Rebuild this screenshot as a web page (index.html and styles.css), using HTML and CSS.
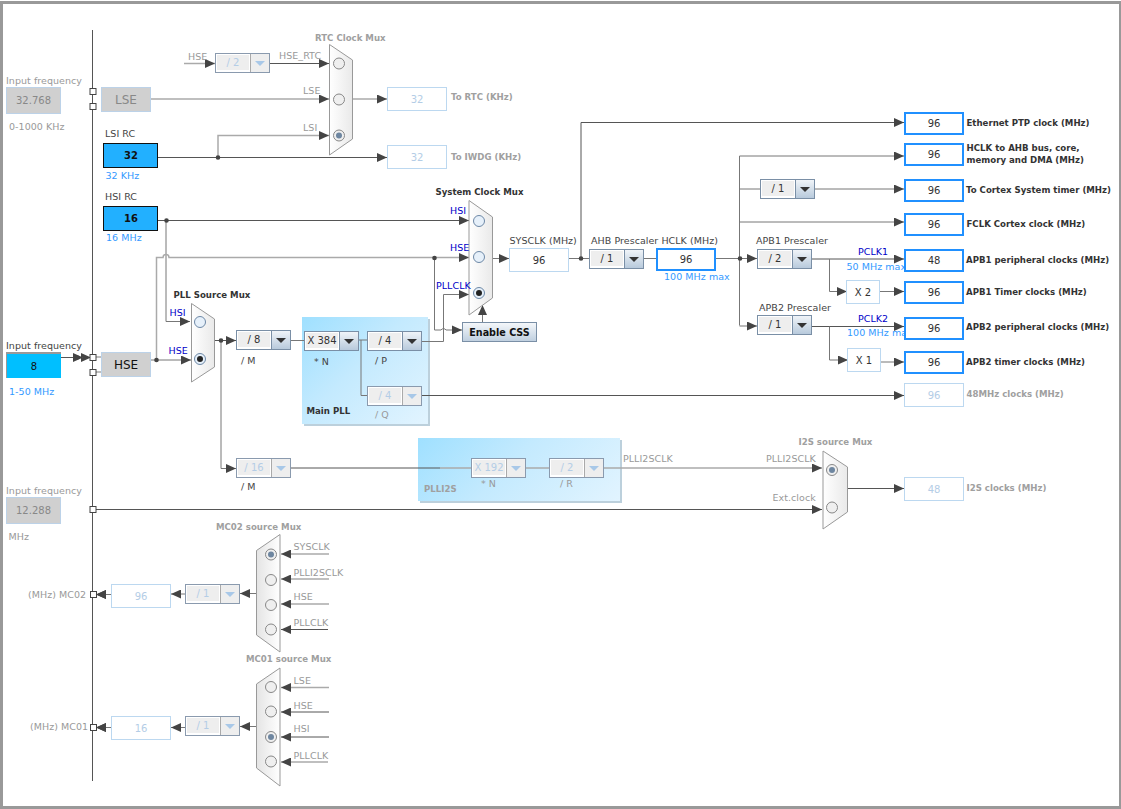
FILE: index.html
```html
<!DOCTYPE html>
<html lang="en">
<head>
    <meta charset="UTF-8">
    <title>Clock Configuration</title>
    <link rel="stylesheet" href="styles.css">
</head>
<body>
<div class="tree">

    <!-- PLL panels sit under the wires -->
    <div class="panel panel-main"></div>
    <div class="panel panel-i2s"></div>

    <svg class="wires" width="1121" height="809" viewBox="0 0 1121 809">
        <defs>
            <marker id="arr" markerUnits="userSpaceOnUse" markerWidth="10" markerHeight="9" refX="10" refY="4.5" orient="auto">
                <path class="arrow" d="M0 0L10 4.5L0 9z"/>
            </marker>
            <linearGradient id="muxfill" x1="0" x2="1" y1="0" y2="0">
                <stop offset="0" stop-color="#ffffff"/>
                <stop offset="1" stop-color="#e9e9e9"/>
            </linearGradient>
            <linearGradient id="muxfillr" x1="0" x2="1" y1="0" y2="0">
                <stop offset="0" stop-color="#e4e4e4"/>
                <stop offset="1" stop-color="#ffffff"/>
            </linearGradient>
        </defs>

        <!-- main bus -->
        <path class="w" d="M92.5 30V781"/>

        <!-- RTC / IWDG -->
        <path class="wg" d="M184 63.5H215" marker-end="url(#arr)"/>
        <path class="w" d="M270 63.5H329" marker-end="url(#arr)"/>
        <path class="wg" d="M151 99H329" marker-end="url(#arr)"/>
        <path class="wg" d="M352 99H387" marker-end="url(#arr)"/>
        <path class="wg" d="M218 157V135.5H329" marker-end="url(#arr)"/>
        <path class="w" d="M158 157.5H387" marker-end="url(#arr)"/>

        <!-- HSI and HSE to the muxes -->
        <path class="w" d="M158 220.5H469" marker-end="url(#arr)"/>
        <path class="wl" d="M166 220.5V321.5H190" marker-end="url(#arr)"/>
        <path class="wg" d="M156.5 360V257.5H163a3 3 0 0 1 6 0H469" marker-end="url(#arr)"/>
        <path class="wl" d="M434.5 258V330H441a3 3 0 0 1 5 0H462" marker-end="url(#arr)"/>
        <path class="wl" d="M422 341.5H443.5V294.5H469" marker-end="url(#arr)"/>
        <path class="wl" d="M482.5 322V305" marker-end="url(#arr)"/>

        <!-- input and HSE -->
        <path class="w" d="M61 357.5H91" marker-end="url(#arr)"/>
        <path class="wg" d="M92 357H101M92 372H101"/>
        <path class="w" d="M61 357.5H83" marker-end="url(#arr)"/>
        <path class="wl" d="M151 360H191" marker-end="url(#arr)"/>

        <!-- PLL -->
        <path class="w" d="M214 340.5H236" marker-end="url(#arr)"/>
        <path class="wl" d="M221 340.5V468.5H236" marker-end="url(#arr)"/>
        <path class="wl" d="M291 340.5H304M359 340H367M361 340V395.5H367"/>
        <path class="w" d="M422 395.5H904" marker-end="url(#arr)"/>

        <!-- I2S -->
        <path class="w" d="M291 468H440"/>
        <path class="wg" d="M440 468H472M526 468H549"/>
        <path class="wg" d="M604 468H822" marker-end="url(#arr)"/>
        <path class="w" d="M92 509.5H822" marker-end="url(#arr)"/>
        <path class="w" d="M847 488.5H904" marker-end="url(#arr)"/>

        <!-- SYSCLK to the bus matrix -->
        <path class="wl" d="M492 258.5H509" marker-end="url(#arr)"/>
        <path class="wl" d="M569 258.5H589M644 258.5H657"/>
        <path class="w" d="M581 258V122.5H904" marker-end="url(#arr)"/>
        <path class="wl" d="M716 258.5H757" marker-end="url(#arr)"/>
        <path class="wl" d="M739.5 325.5V156H904" marker-end="url(#arr)"/>
        <path class="wl" d="M739.5 189H760M815 189H904" marker-end="url(#arr)"/>
        <path class="wl" d="M739.5 222H904" marker-end="url(#arr)"/>
        <path class="wl" d="M739.5 326H757" marker-end="url(#arr)"/>

        <!-- APB -->
        <path class="w" d="M812 259H904" marker-end="url(#arr)"/>
        <path class="wl" d="M829.5 259V291.5H847" marker-end="url(#arr)"/>
        <path class="wl" d="M880 291.5H904" marker-end="url(#arr)"/>
        <path class="w" d="M812 326.5H904" marker-end="url(#arr)"/>
        <path class="wl" d="M829.5 326.5V360H848" marker-end="url(#arr)"/>
        <path class="wl" d="M881 362H904" marker-end="url(#arr)"/>

        <!-- MCO2 / MCO1 -->
        <path class="wg" d="M329 554H281" marker-end="url(#arr)"/>
        <path class="wg" d="M329 579H281" marker-end="url(#arr)"/>
        <path class="wg" d="M329 604H281" marker-end="url(#arr)"/>
        <path class="w" d="M328 629.5H281" marker-end="url(#arr)"/>
        <path class="wg" d="M329 687.5H281" marker-end="url(#arr)"/>
        <path class="w" d="M329 712H281" marker-end="url(#arr)"/>
        <path class="w" d="M329 737H281" marker-end="url(#arr)"/>
        <path class="wg" d="M328 762H281" marker-end="url(#arr)"/>
        <path class="wl" d="M257 593.5H240" marker-end="url(#arr)"/>
        <path class="wl" d="M257 726.5H240" marker-end="url(#arr)"/>
        <path class="wl" d="M185 594H171" marker-end="url(#arr)"/>
        <path class="wl" d="M185 727.5H171" marker-end="url(#arr)"/>
        <path class="wl" d="M111 594.5H96" marker-end="url(#arr)"/>
        <path class="wl" d="M104 594.5H96" marker-end="url(#arr)"/>
        <path class="wl" d="M111 727.5H96" marker-end="url(#arr)"/>
        <path class="wl" d="M104 727.5H96" marker-end="url(#arr)"/>

        <!-- junction dots -->
        <circle class="dot" cx="218" cy="157.5" r="2.3"/>
        <circle class="dot" cx="166.5" cy="220.5" r="2.3"/>
        <circle class="dot" cx="156.5" cy="360" r="2.3"/>
        <circle class="dot" cx="77" cy="357.5" r="2.3"/>
        <circle class="dot" cx="221" cy="340.5" r="2.3"/>
        <circle class="dot" cx="434.5" cy="258" r="2.3"/>
        <circle class="dot" cx="581" cy="258.5" r="2.3"/>
        <circle class="dot" cx="740" cy="258.5" r="2.3"/>

        <!-- bus ports -->
        <rect class="port" x="90" y="88.5" width="6" height="6"/>
        <rect class="port" x="90" y="103.5" width="6" height="6"/>
        <rect class="port" x="90" y="354.5" width="6" height="6"/>
        <rect class="port" x="90" y="369.5" width="6" height="6"/>
        <rect class="port" x="90" y="506.5" width="6" height="6"/>
        <rect class="port" x="90.5" y="591.5" width="6" height="6"/>
        <rect class="port" x="90.5" y="724.5" width="6" height="6"/>

        <!-- muxes -->
        <path class="mux" d="M329.5 44.5L352.5 60V139L329.5 155z"/>
        <circle class="radio" cx="339" cy="63.5" r="5.5"/>
        <circle class="radio" cx="339" cy="99.5" r="5.5"/>
        <circle class="radio" cx="339" cy="135.5" r="5.5"/>
        <circle class="pick" cx="339" cy="135.5" r="3"/>

        <path class="mux" d="M469 200.5L492.5 217V298L469 315z"/>
        <circle class="radio on" cx="479" cy="221" r="5.5"/>
        <circle class="radio on" cx="479" cy="257" r="5.5"/>
        <circle class="radio on" cx="479" cy="293" r="5.5"/>
        <circle class="pick dark" cx="479" cy="293" r="3"/>

        <path class="mux" d="M191.5 303.5L214.5 319V367L191.5 382z"/>
        <circle class="radio on" cx="200" cy="322" r="5.5"/>
        <circle class="radio on" cx="200" cy="359" r="5.5"/>
        <circle class="pick dark" cx="200" cy="359" r="3"/>

        <path class="mux" d="M823 451L847.5 467V512L823 529z"/>
        <circle class="radio" cx="832" cy="470" r="5.5"/>
        <circle class="pick" cx="832" cy="470" r="3"/>
        <circle class="radio" cx="832" cy="507.5" r="5.5"/>

        <path class="mux flip" d="M280 534.5L256.5 550.5V635L280 652z"/>
        <circle class="radio" cx="271" cy="554.5" r="5.5"/>
        <circle class="pick" cx="271" cy="554.5" r="3"/>
        <circle class="radio" cx="271" cy="580" r="5.5"/>
        <circle class="radio" cx="271" cy="605" r="5.5"/>
        <circle class="radio" cx="271" cy="629.5" r="5.5"/>

        <path class="mux flip" d="M280 668L256.5 684V768L280 786z"/>
        <circle class="radio" cx="271" cy="687" r="5.5"/>
        <circle class="radio" cx="271" cy="711.5" r="5.5"/>
        <circle class="radio" cx="271" cy="737" r="5.5"/>
        <circle class="pick" cx="271" cy="737" r="3"/>
        <circle class="radio" cx="271" cy="761.5" r="5.5"/>

        <!-- labels, left side -->
        <text class="t off" x="6" y="84">Input frequency</text>
        <text class="t off" x="9" y="130">0-1000 KHz</text>
        <text class="t" x="105" y="137">LSI RC</text>
        <text class="t max" x="105.5" y="179">32 KHz</text>
        <text class="t" x="105" y="200">HSI RC</text>
        <text class="t max" x="106" y="241">16 MHz</text>
        <text class="t" x="6" y="349">Input frequency</text>
        <text class="t max" x="9" y="395">1-50 MHz</text>
        <text class="t off" x="6" y="494">Input frequency</text>
        <text class="t off" x="8.5" y="540">MHz</text>
        <text class="t off" x="28" y="598">(MHz) MC02</text>
        <text class="t off" x="30" y="730">(MHz) MC01</text>

        <!-- labels, RTC -->
        <text class="t off" x="188" y="60">HSE</text>
        <text class="t off" x="279" y="59">HSE_RTC</text>
        <text class="t off" x="303" y="94">LSE</text>
        <text class="t off" x="303" y="131">LSI</text>
        <text class="b off" x="315" y="41">RTC Clock Mux</text>
        <text class="b off" x="451" y="100">To RTC (KHz)</text>
        <text class="b off" x="451" y="160">To IWDG (KHz)</text>

        <!-- labels, system clock -->
        <text class="b" x="435.5" y="195">System Clock Mux</text>
        <text class="t sel" x="450" y="214">HSI</text>
        <text class="t sel" x="450" y="251">HSE</text>
        <text class="t sel" x="436" y="289">PLLCLK</text>
        <text class="b" x="173.5" y="298">PLL Source Mux</text>
        <text class="t sel" x="169.5" y="316">HSI</text>
        <text class="t sel" x="168.5" y="354">HSE</text>
        <text class="t" x="241" y="364">/ M</text>
        <text class="t" x="314" y="365">* N</text>
        <text class="t" x="375" y="364">/ P</text>
        <text class="t off" x="375" y="418">/ Q</text>
        <text class="b" x="306.5" y="414">Main PLL</text>
        <text class="t" x="241" y="490">/ M</text>
        <text class="t off" x="481" y="487">* N</text>
        <text class="t off" x="560" y="487">/ R</text>
        <text class="b off" x="424" y="492">PLLI2S</text>
        <text class="t off" x="623" y="462">PLLI2SCLK</text>
        <text class="t off" x="766" y="462">PLLI2SCLK</text>
        <text class="t off" x="772.5" y="501">Ext.clock</text>
        <text class="b off" x="798.5" y="445">I2S source Mux</text>

        <text class="t" x="509.5" y="244">SYSCLK (MHz)</text>
        <text class="t" x="591" y="244">AHB Prescaler HCLK (MHz)</text>
        <text class="t max" x="664" y="280">100 MHz max</text>
        <text class="t" x="756" y="244">APB1 Prescaler</text>
        <text class="t" x="759" y="311">APB2 Prescaler</text>
        <text class="t sel" x="858" y="255">PCLK1</text>
        <text class="t max" x="846.5" y="270">50 MHz max</text>
        <text class="t sel" x="858" y="322">PCLK2</text>
        <text class="t max" x="847" y="336">100 MHz max</text>

        <!-- labels, outputs -->
        <text class="b" x="966.5" y="126">Ethernet PTP clock (MHz)</text>
        <text class="b" x="966.5" y="151">HCLK to AHB bus, core,</text>
        <text class="b" x="966.5" y="163">memory and DMA (MHz)</text>
        <text class="b" x="966" y="193">To Cortex System timer (MHz)</text>
        <text class="b" x="966.5" y="227">FCLK Cortex clock (MHz)</text>
        <text class="b" x="966" y="263">APB1 peripheral clocks (MHz)</text>
        <text class="b" x="966" y="295">APB1 Timer clocks (MHz)</text>
        <text class="b" x="966" y="330">APB2 peripheral clocks (MHz)</text>
        <text class="b" x="966" y="365">APB2 timer clocks (MHz)</text>
        <text class="b off" x="966.5" y="397">48MHz clocks (MHz)</text>
        <text class="b off" x="966.5" y="491">I2S clocks (MHz)</text>

        <!-- labels, MCO -->
        <text class="b off" x="216" y="530">MC02 source Mux</text>
        <text class="t off" x="293.5" y="550">SYSCLK</text>
        <text class="t off" x="293.5" y="576">PLLI2SCLK</text>
        <text class="t off" x="293.5" y="600">HSE</text>
        <text class="t off" x="293.5" y="626">PLLCLK</text>
        <text class="b off" x="246" y="662">MC01 source Mux</text>
        <text class="t off" x="293.5" y="684">LSE</text>
        <text class="t off" x="293.5" y="709">HSE</text>
        <text class="t off" x="293.5" y="732">HSI</text>
        <text class="t off" x="293.5" y="759">PLLCLK</text>
    </svg>

    <!-- sources -->
    <div class="box src grey lse-in">32.768</div>
    <div class="box src grey big lse">LSE</div>
    <div class="box src rc lsi">32</div>
    <div class="box src rc hsi">16</div>
    <div class="box src live hse-in">8</div>
    <div class="box src grey big dark-txt hse">HSE</div>
    <div class="box src grey i2s-in">12.288</div>

    <!-- dropdowns -->
    <div class="dd off dd-rtc"><span class="val">/ 2</span><span class="btn"></span></div>
    <div class="dd dd-m"><span class="val">/ 8</span><span class="btn"></span></div>
    <div class="dd dd-n"><span class="val">X 384</span><span class="btn"></span></div>
    <div class="dd dd-p"><span class="val">/ 4</span><span class="btn"></span></div>
    <div class="dd off dd-q"><span class="val">/ 4</span><span class="btn"></span></div>
    <div class="dd off dd-m2"><span class="val">/ 16</span><span class="btn"></span></div>
    <div class="dd off dd-n2"><span class="val">X 192</span><span class="btn"></span></div>
    <div class="dd off dd-r2"><span class="val">/ 2</span><span class="btn"></span></div>
    <div class="dd dd-ahb"><span class="val">/ 1</span><span class="btn"></span></div>
    <div class="dd dd-sys"><span class="val">/ 1</span><span class="btn"></span></div>
    <div class="dd dd-apb1"><span class="val">/ 2</span><span class="btn"></span></div>
    <div class="dd dd-apb2"><span class="val">/ 1</span><span class="btn"></span></div>
    <div class="dd off dd-mco2"><span class="val">/ 1</span><span class="btn"></span></div>
    <div class="dd off dd-mco1"><span class="val">/ 1</span><span class="btn"></span></div>

    <button class="css-btn">Enable CSS</button>

    <!-- outputs -->
    <div class="box out faint o-rtc">32</div>
    <div class="box out faint o-iwdg">32</div>
    <div class="box out o-sysclk">96</div>
    <div class="box out hot o-hclk">96</div>
    <div class="box out hot o-eth">96</div>
    <div class="box out hot o-ahb">96</div>
    <div class="box out hot o-cortex">96</div>
    <div class="box out hot o-fclk">96</div>
    <div class="box out hot o-apb1">48</div>
    <div class="box out hot o-tim1">96</div>
    <div class="box out hot o-apb2">96</div>
    <div class="box out hot o-tim2">96</div>
    <div class="box out faint o-48">96</div>
    <div class="box out faint o-i2s">48</div>
    <div class="box out faint o-mco2">96</div>
    <div class="box out faint o-mco1">16</div>
    <div class="box out o-x2">X 2</div>
    <div class="box out o-x1">X 1</div>
</div>
</body>
</html>
```

FILE: styles.css
```css
body {
    margin: 0;
    background-color: #fff;
    font-family: "DejaVu Sans", sans-serif;
}

.tree {
    position: relative;
    width: 1121px;
    height: 809px;
    overflow: hidden;
}

/* grey frame round the whole picture */
.tree::after {
    content: "";
    position: absolute;
    inset: 1px 0 0 0;
    border: solid #999;
    border-width: 3px 2px 3px 3px;
    pointer-events: none;
}

.wires {
    position: absolute;
    left: 0;
    top: 0;
}

/* wires */
.w, .wl, .wg {
    fill: none;
}

.w {
    stroke: #555;
    stroke-width: 1;
}

.wl {
    stroke: #777;
    stroke-width: 1;
}

.wg {
    stroke: #aaa;
    stroke-width: 1.5;
}

.arrow, .dot {
    fill: #444;
}

.port {
    fill: #fff;
    stroke: #444;
    stroke-width: 1;
}

.mux {
    fill: url(#muxfill);
    stroke: #999;
    stroke-width: 1;
}

.mux.flip {
    fill: url(#muxfillr);
}

.radio {
    fill: #efefef;
    stroke: #888;
    stroke-width: 1;
}

.radio.on {
    fill: #e6f0fa;
    stroke: #6d88a6;
}

.pick {
    fill: #6e86a0;
}

.pick.dark {
    fill: #222;
}

/* labels */
.t, .b {
    font-size: 9.5px;
    letter-spacing: 0.05px;
    fill: #444;
}

.b {
    font-weight: bold;
    font-size: 8.6px;
    letter-spacing: 0;
    fill: #333;
}

.t.off {
    fill: #999;
}

.b.off {
    fill: #a0a0a0;
}

.t.max {
    fill: #3399ff;
}

.t.sel {
    fill: #0000c8;
}

/* PLL panels */
.panel {
    position: absolute;
    background: linear-gradient(135deg, #9fe0ff 0%, #c4eafe 45%, #e2f4ff 100%);
    box-shadow: 2px 2px 0 #bcd0dc;
}

.panel-main {
    left: 302px;
    top: 317px;
    width: 126px;
    height: 107px;
}

.panel-i2s {
    left: 418px;
    top: 438px;
    width: 202px;
    height: 63px;
}

/* value boxes */
.box {
    position: absolute;
    box-sizing: border-box;
    display: flex;
    align-items: center;
    justify-content: center;
    font-size: 10px;
    color: #333;
    background-color: #fff;
}

.src {
    width: 55px;
}

.grey {
    height: 27px;
    background-color: #d0d0d0;
    border: 1px solid #bcd2e8;
    color: #888;
}

.big {
    width: 50px;
    height: 25px;
    font-size: 12px;
}

.dark-txt {
    color: #111;
}

.rc {
    height: 25px;
    background-color: #22b0ff;
    border: 1px solid #111;
    color: #111;
    font-weight: bold;
    padding-left: 1px;
}

.live {
    height: 26px;
    background-color: #00bfff;
    border: solid #999;
    border-width: 2px 0 0 1px;
    color: #111;
}

.lse-in { left: 6px; top: 87px; }
.lse { left: 101px; top: 87px; }
.lsi { left: 103px; top: 143px; }
.hsi { left: 103px; top: 206px; }
.hse-in { left: 6px; top: 352px; }
.hse { left: 101px; top: 352px; }
.i2s-in { left: 6px; top: 497px; }

.out {
    width: 60px;
    height: 24px;
    border: 1px solid #bcd8f0;
}

.out.faint {
    color: #b4cde6;
}

.out.hot {
    height: 23px;
    border: 2px solid #2090ff;
}

.o-rtc { left: 387px; top: 87px; }
.o-iwdg { left: 387px; top: 145px; }
.o-sysclk { left: 509px; top: 248px; }
.o-hclk { left: 656px; top: 248px; height: 24px; border-width: 2px; }
.o-eth { left: 904px; top: 112px; }
.o-ahb { left: 904px; top: 143px; }
.o-cortex { left: 904px; top: 179px; }
.o-fclk { left: 904px; top: 213px; }
.o-apb1 { left: 904px; top: 249px; }
.o-tim1 { left: 904px; top: 281px; }
.o-apb2 { left: 904px; top: 317px; }
.o-tim2 { left: 904px; top: 351px; }
.o-48 { left: 904px; top: 383px; }
.o-i2s { left: 904px; top: 477px; }
.o-mco2 { left: 111px; top: 584px; }
.o-mco1 { left: 111px; top: 716px; }
.o-x2 { left: 846px; top: 280px; width: 34px; }
.o-x1 { left: 847px; top: 348px; width: 34px; }

/* dropdowns */
.dd {
    position: absolute;
    box-sizing: border-box;
    display: flex;
    width: 55px;
    height: 20px;
    border: 1px solid #7a8fa6;
    background-color: #fff;
    font-size: 10px;
    color: #333;
}

.dd .val {
    flex: 1;
    display: flex;
    align-items: center;
    justify-content: center;
    margin: 1px 1px 2px 1px;
    background-color: #eee;
    white-space: nowrap;
}

.dd .btn {
    width: 18px;
    border-left: 1px solid #7a8fa6;
    background: linear-gradient(#f0f4f8, #b8cadc);
    position: relative;
}

.dd .btn::after {
    content: "";
    position: absolute;
    left: 4px;
    top: 7px;
    border: 5px solid transparent;
    border-top: 5px solid #333;
    border-bottom: 0;
}

.dd.off {
    border-color: #8a9aae;
    color: #b4cde6;
}

.dd.off .btn {
    background: #eee;
    border-left-color: #aaa;
}

.dd.off .btn::after {
    border-top-color: #a8c8e8;
}

.dd-rtc { left: 215px; top: 53px; }
.dd-m { left: 236px; top: 330px; }
.dd-n { left: 304px; top: 331px; }
.dd-p { left: 367px; top: 331px; }
.dd-q { left: 367px; top: 386px; }
.dd-m2 { left: 236px; top: 458px; }
.dd-n2 { left: 471px; top: 458px; }
.dd-r2 { left: 549px; top: 458px; }
.dd-ahb { left: 589px; top: 249px; }
.dd-sys { left: 760px; top: 179px; }
.dd-apb1 { left: 757px; top: 249px; }
.dd-apb2 { left: 757px; top: 315px; }
.dd-mco2 { left: 185px; top: 584px; }
.dd-mco1 { left: 185px; top: 716px; }

.css-btn {
    position: absolute;
    left: 462px;
    top: 322px;
    box-sizing: border-box;
    width: 75px;
    height: 20px;
    padding: 0;
    border: 1px solid #7a8fa6;
    background: linear-gradient(#f4f7fa, #c0d0e0);
    font-family: "DejaVu Sans", sans-serif;
    font-size: 9.6px;
    font-weight: bold;
    color: #111;
}
```
